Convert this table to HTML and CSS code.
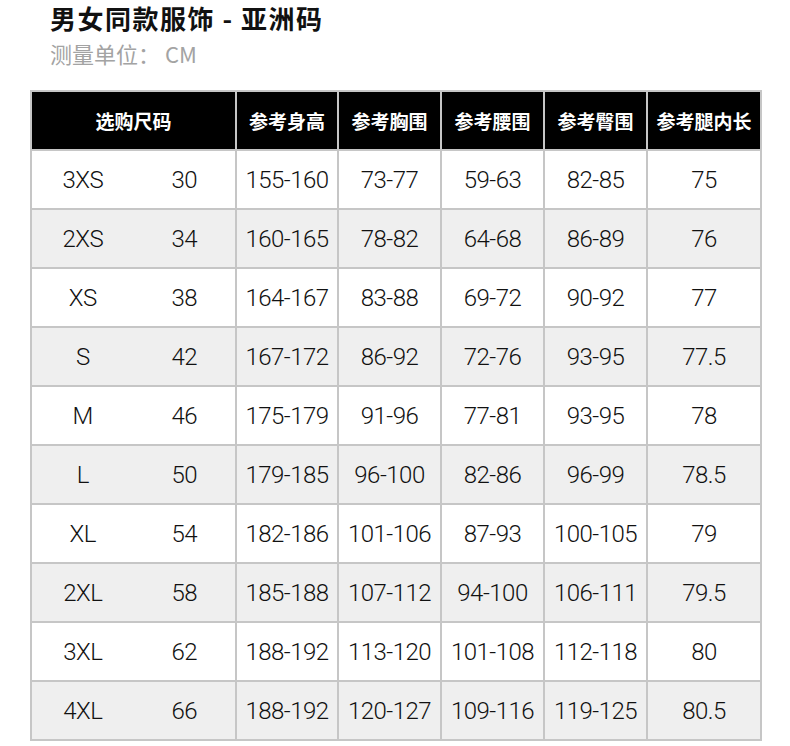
FILE: index.html
```html
<!DOCTYPE html>
<html lang="zh-CN">
<head>
<meta charset="utf-8">
<title>男女同款服饰 - 亚洲码</title>
<link rel="stylesheet" href="styles.css">
</head>
<body>
<div class="page">
  <header class="head">
    <h1 class="title">男女同款服饰 - 亚洲码</h1>
    <p class="unit">测量单位： CM</p>
  </header>
  <table class="size-table">
    <colgroup>
      <col class="c-half"><col class="c-half">
      <col class="c-std"><col class="c-std2"><col class="c-std2"><col class="c-std2"><col class="c-last">
    </colgroup>
    <thead>
      <tr>
        <th colspan="2">选购尺码</th>
        <th>参考身高</th>
        <th>参考胸围</th>
        <th>参考腰围</th>
        <th>参考臀围</th>
        <th>参考腿内长</th>
      </tr>
    </thead>
    <tbody>
      <tr><td class="sz">3XS</td><td class="num">30</td><td>155-160</td><td>73-77</td><td>59-63</td><td>82-85</td><td>75</td></tr>
      <tr><td class="sz">2XS</td><td class="num">34</td><td>160-165</td><td>78-82</td><td>64-68</td><td>86-89</td><td>76</td></tr>
      <tr><td class="sz">XS</td><td class="num">38</td><td>164-167</td><td>83-88</td><td>69-72</td><td>90-92</td><td>77</td></tr>
      <tr><td class="sz">S</td><td class="num">42</td><td>167-172</td><td>86-92</td><td>72-76</td><td>93-95</td><td>77.5</td></tr>
      <tr><td class="sz">M</td><td class="num">46</td><td>175-179</td><td>91-96</td><td>77-81</td><td>93-95</td><td>78</td></tr>
      <tr><td class="sz">L</td><td class="num">50</td><td>179-185</td><td>96-100</td><td>82-86</td><td>96-99</td><td>78.5</td></tr>
      <tr><td class="sz">XL</td><td class="num">54</td><td>182-186</td><td>101-106</td><td>87-93</td><td>100-105</td><td>79</td></tr>
      <tr><td class="sz">2XL</td><td class="num">58</td><td>185-188</td><td>107-112</td><td>94-100</td><td>106-111</td><td>79.5</td></tr>
      <tr><td class="sz">3XL</td><td class="num">62</td><td>188-192</td><td>113-120</td><td>101-108</td><td>112-118</td><td>80</td></tr>
      <tr><td class="sz">4XL</td><td class="num">66</td><td>188-192</td><td>120-127</td><td>109-116</td><td>119-125</td><td>80.5</td></tr>
    </tbody>
  </table>
</div>
</body>
</html>
```
FILE: styles.css
```css
html, body {
  margin: 0;
  padding: 0;
  background: #ffffff;
}

.page {
  width: 790px;
  font-family: "Noto Sans CJK SC", "Noto Sans", sans-serif;
}

.head {
  padding-left: 50px;
}

.title {
  margin: 0;
  padding-top: 1px;
  font-size: 26px;
  line-height: 34px;
  font-weight: 700;
  letter-spacing: 1.5px;
  color: #111111;
}

.unit {
  margin: 4px 0 0 0;
  font-size: 22px;
  line-height: 28px;
  font-weight: 400;
  color: #a3a3a3;
}

.size-table {
  margin: 23px 0 0 30px;
  width: 730px;
  table-layout: fixed;
  border-collapse: collapse;
  border: 2px solid #c6c6c6;
}

.c-half { width: 102.5px; }
.c-std { width: 102px; }
.c-std2 { width: 103px; }
.c-last { width: 114px; }

.size-table th {
  height: 57px;
  padding: 0;
  background: #000000;
  color: #ffffff;
  font-size: 19px;
  font-weight: 700;
  text-align: center;
  border: 2px solid #c6c6c6;
  border-top: 0;
  white-space: nowrap;
}

.size-table td {
  height: 57px;
  padding: 0;
  text-align: center;
  font-family: "Roboto", "Liberation Sans", sans-serif;
  font-size: 24px;
  font-weight: 300;
  letter-spacing: -0.5px;
  color: #111111;
  border: 2px solid #c6c6c6;
  white-space: nowrap;
}

.size-table td.sz {
  border-right: 0;
}

.size-table td.num {
  border-left: 0;
}

.size-table tbody tr:nth-child(even) td {
  background: #efefef;
}
```
